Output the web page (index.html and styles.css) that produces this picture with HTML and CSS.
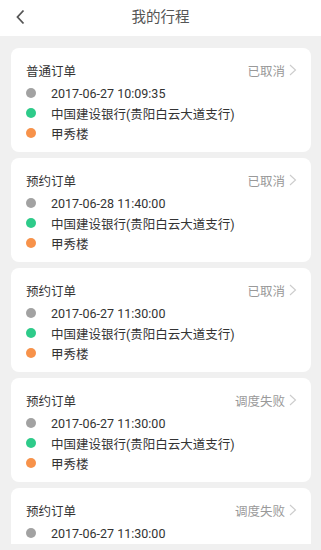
FILE: index.html
```html
<!DOCTYPE html>
<html lang="zh">
<head>
<meta charset="utf-8">
<title>我的行程</title>
<link rel="stylesheet" href="styles.css">
</head>
<body>
<div class="app">
  <header class="topbar">
    <svg class="back" width="10" height="16" viewBox="0 0 10 16"><path d="M8.5 1.5 L2.5 8 L8.5 14.5" fill="none" stroke="#555" stroke-width="1.8"/></svg>
    <h1 class="title">我的行程</h1>
  </header>
  <main class="list">
    <section class="card">
      <div class="card-head"><span class="type">普通订单</span><span class="status">已取消<svg class="arrow" width="8" height="12" viewBox="0 0 8 12"><path d="M1 1 L6.5 6 L1 11" fill="none" stroke="#ccc" stroke-width="1.1"/></svg></span></div>
      <div class="row"><i class="dot gray"></i><span>2017-06-27 10:09:35</span></div>
      <div class="row"><i class="dot green"></i><span>中国建设银行(贵阳白云大道支行)</span></div>
      <div class="row"><i class="dot orange"></i><span>甲秀楼</span></div>
    </section>
    <section class="card">
      <div class="card-head"><span class="type">预约订单</span><span class="status">已取消<svg class="arrow" width="8" height="12" viewBox="0 0 8 12"><path d="M1 1 L6.5 6 L1 11" fill="none" stroke="#ccc" stroke-width="1.1"/></svg></span></div>
      <div class="row"><i class="dot gray"></i><span>2017-06-28 11:40:00</span></div>
      <div class="row"><i class="dot green"></i><span>中国建设银行(贵阳白云大道支行)</span></div>
      <div class="row"><i class="dot orange"></i><span>甲秀楼</span></div>
    </section>
    <section class="card">
      <div class="card-head"><span class="type">预约订单</span><span class="status">已取消<svg class="arrow" width="8" height="12" viewBox="0 0 8 12"><path d="M1 1 L6.5 6 L1 11" fill="none" stroke="#ccc" stroke-width="1.1"/></svg></span></div>
      <div class="row"><i class="dot gray"></i><span>2017-06-27 11:30:00</span></div>
      <div class="row"><i class="dot green"></i><span>中国建设银行(贵阳白云大道支行)</span></div>
      <div class="row"><i class="dot orange"></i><span>甲秀楼</span></div>
    </section>
    <section class="card">
      <div class="card-head"><span class="type">预约订单</span><span class="status">调度失败<svg class="arrow" width="8" height="12" viewBox="0 0 8 12"><path d="M1 1 L6.5 6 L1 11" fill="none" stroke="#ccc" stroke-width="1.1"/></svg></span></div>
      <div class="row"><i class="dot gray"></i><span>2017-06-27 11:30:00</span></div>
      <div class="row"><i class="dot green"></i><span>中国建设银行(贵阳白云大道支行)</span></div>
      <div class="row"><i class="dot orange"></i><span>甲秀楼</span></div>
    </section>
    <section class="card">
      <div class="card-head"><span class="type">预约订单</span><span class="status">调度失败<svg class="arrow" width="8" height="12" viewBox="0 0 8 12"><path d="M1 1 L6.5 6 L1 11" fill="none" stroke="#ccc" stroke-width="1.1"/></svg></span></div>
      <div class="row"><i class="dot gray"></i><span>2017-06-27 11:30:00</span></div>
    </section>
  </main>
</div>
</body>
</html>
```
FILE: styles.css
```css
* { box-sizing: border-box; }
html, body { margin: 0; padding: 0; }
body {
  font-family: Roboto, "Noto Sans CJK SC", sans-serif;
  background: #f0f0f0;
  color: #333;
}
.app {
  height: 550px;
  display: flex;
  flex-direction: column;
  overflow: hidden;
}
.topbar {
  height: 36px;
  flex: none;
  background: #fff;
  display: flex;
  align-items: center;
  justify-content: center;
  position: relative;
}
.back {
  position: absolute;
  left: 15px;
  top: 9px;
}
.title {
  margin: 0;
  font-size: 14.5px;
  font-weight: normal;
  color: #555;
  line-height: 20px;
}
.list {
  flex: 1;
  min-height: 0;
  margin: 12px 10px 6px 11px;
  display: flex;
  flex-direction: column;
  gap: 6px;
  overflow: hidden;
}
.card {
  flex: none;
  background: #fff;
  border-radius: 8px;
  padding: 13px 14px 9px 15px;
}
.list .card:last-child {
  padding-bottom: 12px;
  border-radius: 8px 8px 0 0;
}
.card-head {
  display: flex;
  justify-content: space-between;
  align-items: center;
  height: 18px;
  margin-bottom: 4px;
}
.type {
  font-size: 12.5px;
  color: #333;
}
.status {
  font-size: 12.5px;
  color: #999;
  display: flex;
  align-items: center;
}
.arrow {
  margin-left: 4px;
}
.row {
  display: flex;
  align-items: center;
  height: 20px;
  font-size: 12.5px;
  color: #333;
}
.dot {
  width: 10px;
  height: 10px;
  border-radius: 50%;
  margin-right: 15px;
  flex: none;
}
.gray { background: #a2a2a2; }
.green { background: #2ecb8a; }
.orange { background: #f7924a; }
```
